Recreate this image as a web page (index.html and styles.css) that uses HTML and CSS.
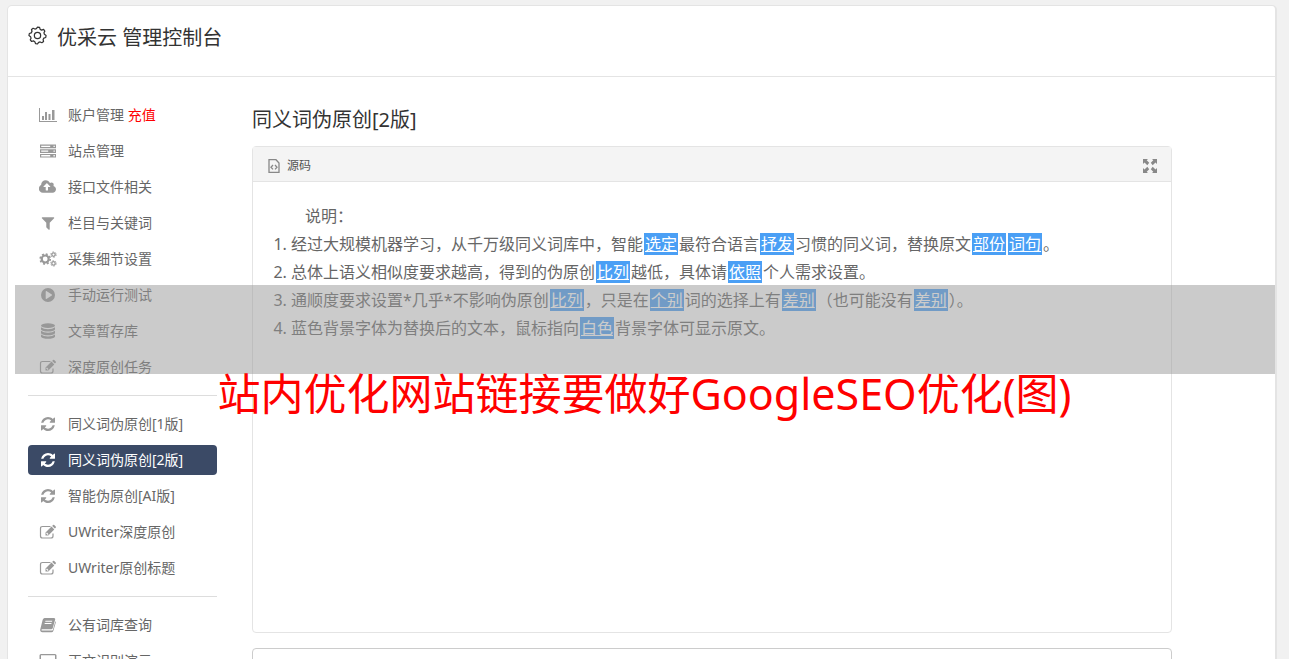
FILE: index.html
```
<!DOCTYPE html>
<html lang="zh-CN">
<head>
<meta charset="utf-8">
<title>优采云 管理控制台</title>
<link rel="stylesheet" href="styles.css">
</head>
<body>
<svg class="sprite" aria-hidden="true">
  <symbol id="i-gear" viewBox="0 0 20 20"><path d="M10 1.2 12.2 1.5 12.8 3.5 14.4 4.3 16.4 3.6 17.7 5.4 16.8 7.2 17.3 8.8 19 10 18.7 12.1 16.7 12.7 15.9 14.3 16.4 16.2 14.6 17.6 12.8 16.8 11.2 17.2 10 18.8 7.9 18.5 7.2 16.5 5.7 15.7 3.8 16.3 2.4 14.6 3.2 12.8 2.7 11.2 1 10 1.4 7.9 3.4 7.2 4.2 5.7 3.7 3.7 5.4 2.4 7.2 3.2 8.8 2.7Z" fill="none" stroke="currentColor" stroke-width="1.3" stroke-linejoin="round"/><circle cx="10" cy="10" r="3.3" fill="none" stroke="currentColor" stroke-width="1.3"/></symbol>
  <symbol id="i-chart" viewBox="0 0 18 16"><path d="M0 1h1v13h17v1H0zM3 9h2v4H3zM6 5h2v8H6zM9.500 7h2v6h-2zM13 3h2.500v10H13z"/></symbol>
  <symbol id="i-server" viewBox="0 0 18 16"><path fill-rule="evenodd" d="M1 1.500h16v3.700H1zM2.200 2.700v1.300h9V2.700zM14.500 2.700v1.300h1.300V2.700zM1 6.200h16v3.700H1zM2.200 7.400v1.300h7V7.400zM14.500 7.400v1.300h1.300V7.400zM1 10.900h16v3.700H1zM2.200 12.100v1.300h9v-1.300zM14.500 12.100v1.300h1.300v-1.300z"/></symbol>
  <symbol id="i-cloud" viewBox="0 0 1920 1792"><path d="M1216 864q0-14-9-23l-352-352q-9-9-23-9t-23 9l-351 351q-10 12-10 24 0 14 9 23t23 9h224v352q0 13 9.500 22.500t22.500 9.500h192q13 0 22.500-9.500t9.500-22.500v-352h224q13 0 22.500-9.500t9.500-22.500zm640 288q0 159-112.500 271.500t-271.500 112.500h-1088q-185 0-316.500-131.500t-131.500-316.500q0-130 70-240t188-165q-2-30-2-43 0-212 150-362t362-150q156 0 285.500 87t188.500 231q71-62 166-62 106 0 181 75t75 181q0 76-41 138 130 31 213.500 135.500t83.500 238.500z"/></symbol>
  <symbol id="i-filter" viewBox="0 0 1792 1792"><path d="M1595 295q17 41-14 70l-493 493v742q0 42-39 59-13 5-25 5-27 0-45-19l-256-256q-19-19-19-45v-486l-493-493q-31-29-14-70 17-39 59-39h1280q42 0 59 39z"/></symbol>
  <symbol id="i-cogs" viewBox="0 0 18 16"><g fill="none" stroke="currentColor"><circle cx="6.200" cy="8" r="3.500" stroke-width="2.200"/><circle cx="6.200" cy="8" r="5" stroke-width="1.600" stroke-dasharray="2 1.927"/><circle cx="14.500" cy="3.600" r="1.700" stroke-width="1.300"/><circle cx="14.500" cy="3.600" r="2.700" stroke-width="1" stroke-dasharray="1.400 1.427"/><circle cx="14.500" cy="12.400" r="1.700" stroke-width="1.300"/><circle cx="14.500" cy="12.400" r="2.700" stroke-width="1" stroke-dasharray="1.400 1.427"/></g></symbol>
  <symbol id="i-play" viewBox="0 0 18 16"><path fill-rule="evenodd" d="M9 1a7 7 0 1 0 0 14A7 7 0 1 0 9 1zM6.700 4.500q0-.7.7-.4l5.400 3.400q.6.500 0 1l-5.400 3.400q-.7.300-.7-.4z"/></symbol>
  <symbol id="i-database" viewBox="0 0 18 16"><ellipse cx="9" cy="2.600" rx="7" ry="2.400"/><path d="M2 4.200q2.500 2 7 2t7-2v2.400q-1.500 2-7 2t-7-2zM2 7.800q2.500 2 7 2t7-2v2.400q-1.500 2-7 2t-7-2zM2 11.400q2.500 2 7 2t7-2v2.300q-1.500 2-7 2t-7-2z"/></symbol>
  <symbol id="i-edit" viewBox="0 0 18 16"><path d="M11.500 2.500H3.500q-2 0-2 2v7.500q0 2 2 2h8.500q2 0 2-2V9.500" fill="none" stroke="currentColor" stroke-width="1.200"/><path fill-rule="evenodd" d="M6.500 11.500V8.600l6-6 2.800 2.800-6 6zM7.400 9.100l-.1.900h.8v.8h.8l.6-.6-1.500-1.600zM13.200 1.900l.8-.8q.6-.6 1.200 0l1.500 1.500q.6.600 0 1.200l-.8.800z"/></symbol>
  <symbol id="i-refresh" viewBox="0 0 1536 1536"><path d="M1511 928q0 5-1 7-64 268-268 434.500t-478 166.500q-146 0-282.500-55t-243.500-157l-129 129q-19 19-45 19t-45-19-19-45v-448q0-26 19-45t45-19h448q26 0 45 19t19 45-19 45l-137 137q71 66 161 102t187 36q134 0 250-65t186-179q11-17 53-117 8-23 30-23h192q13 0 22.500 9.500t9.500 22.500zm25-800v448q0 26-19 45t-45 19h-448q-26 0-45-19t-19-45 19-45l138-138q-148-137-349-137-134 0-250 65t-186 179q-11 17-53 117-8 23-30 23h-199q-13 0-22.500-9.500t-9.500-22.500v-7q65-268 270-434.500t480-166.500q146 0 284 55.500t245 156.500l130-129q19-19 45-19t45 19 19 45z"/></symbol>
  <symbol id="i-book" viewBox="0 0 18 16"><path fill-rule="evenodd" d="M5.500 1H15q1.500.2 1.200 1.500l-2.500 8.700q-.4 1.100-1.500 1.100H3.300q-.9.100-.9.700.1.600 1 .6h9.400q.8 0 1.100-.9l2.500-8.500q.7.500.4 1.300l-2.500 8.400q-.4 1.400-1.800 1.400H3.200q-1.700-.2-2-1.800-.1-.7.100-1.300L3.600 3Q4 1.400 5.500 1zM6.500 3.700l-.3 1H13l.3-1zM5.800 6l-.3 1h6.800l.3-1z"/></symbol>
  <symbol id="i-screen" viewBox="0 0 18 16"><path fill-rule="evenodd" d="M2 1h14q1.500 0 1.500 1.500v9q0 1.500-1.500 1.500h-5v2H7v-2H2q-1.500 0-1.500-1.500v-9Q.5 1 2 1zm0 1.300v8.400h14V2.300z"/></symbol>
  <symbol id="i-source" viewBox="0 0 12 14"><path d="M1 .700h7L11 4v9.300H1z" fill="none" stroke="currentColor" stroke-width="1.300"/><path d="M5 6 3 8.200 5 10.400M7 6l2 2.200-2 2.200" fill="none" stroke="currentColor" stroke-width="1.300"/></symbol>
  <symbol id="i-expand" viewBox="0 0 14 14"><path d="M0 0h5L3.700 1.300 6.200 3.800 4.300 6.200 1.500 3.500 0 5zM14 0v5l-1.500-1.500-2.800 2.700-1.900-2.400 2.500-2.500L9 0zM0 14V9l1.500 1.500 2.800-2.700 1.900 2.400-2.500 2.500L5 14zM14 14H9l1.300-1.300-2.500-2.500 1.900-2.400 2.800 2.700L14 9z"/></symbol>
</svg>

<div class="shell">
  <header class="topbar">
    <svg class="topbar-icon"><use href="#i-gear"/></svg>
    <h1 class="topbar-title">优采云 管理控制台</h1>
  </header>

  <div class="columns">
    <nav class="sidebar">
      <ul class="menu">
        <li><a class="item" href="#"><svg class="icon"><use href="#i-chart"/></svg><span>账户管理 <em class="recharge">充值</em></span></a></li>
        <li><a class="item" href="#"><svg class="icon"><use href="#i-server"/></svg>站点管理</a></li>
        <li><a class="item" href="#"><svg class="icon"><use href="#i-cloud"/></svg>接口文件相关</a></li>
        <li><a class="item" href="#"><svg class="icon"><use href="#i-filter"/></svg>栏目与关键词</a></li>
        <li><a class="item" href="#"><svg class="icon"><use href="#i-cogs"/></svg>采集细节设置</a></li>
        <li><a class="item" href="#"><svg class="icon"><use href="#i-play"/></svg>手动运行测试</a></li>
        <li><a class="item" href="#"><svg class="icon"><use href="#i-database"/></svg>文章暂存库</a></li>
        <li><a class="item" href="#"><svg class="icon"><use href="#i-edit"/></svg>深度原创任务</a></li>
      </ul>
      <ul class="menu">
        <li><a class="item" href="#"><svg class="icon icon-small"><use href="#i-refresh"/></svg>同义词伪原创[1版]</a></li>
        <li><a class="item item-active" href="#" aria-current="page"><svg class="icon icon-small"><use href="#i-refresh"/></svg>同义词伪原创[2版]</a></li>
        <li><a class="item" href="#"><svg class="icon icon-small"><use href="#i-refresh"/></svg>智能伪原创[AI版]</a></li>
        <li><a class="item" href="#"><svg class="icon"><use href="#i-edit"/></svg>UWriter深度原创</a></li>
        <li><a class="item" href="#"><svg class="icon"><use href="#i-edit"/></svg>UWriter原创标题</a></li>
      </ul>
      <ul class="menu">
        <li><a class="item" href="#"><svg class="icon"><use href="#i-book"/></svg>公有词库查询</a></li>
        <li><a class="item" href="#"><svg class="icon"><use href="#i-screen"/></svg>正文识别演示</a></li>
      </ul>
    </nav>

    <main class="content">
      <h2 class="content-title">同义词伪原创[2版]</h2>
      <section class="editor">
        <div class="toolbar">
          <button class="tool" type="button"><svg class="tool-source"><use href="#i-source"/></svg>源码</button>
          <button class="tool" type="button" aria-label="全屏"><svg class="tool-expand"><use href="#i-expand"/></svg></button>
        </div>
        <div class="document">
          <p class="lead">说明：</p>
          <ol class="notes">
            <li>经过大规模机器学习，从千万级同义词库中，智能<mark>选定</mark>最符合语言<mark>抒发</mark>习惯的同义词，替换原文<mark>部份</mark><mark>词句</mark>。</li>
            <li>总体上语义相似度要求越高，得到的伪原创<mark>比列</mark>越低，具体请<mark>依照</mark>个人需求设置。</li>
            <li>通顺度要求设置*几乎*不影响伪原创<mark>比列</mark>，只是在<mark>个别</mark>词的选择上有<mark>差别</mark>（也可能没有<mark>差别</mark>）。</li>
            <li>蓝色背景字体为替换后的文本，鼠标指向<mark>白色</mark>背景字体可显示原文。</li>
          </ol>
        </div>
      </section>
      <textarea class="result" aria-label="结果"></textarea>
    </main>
  </div>
</div>

<div class="band"></div>
<p class="caption">站内优化网站链接要做好GoogleSEO优化(图)</p>
</body>
</html>
```
FILE: styles.css
```
* { box-sizing: border-box; }

body {
  position: relative;
  height: 100vh;
  margin: 0;
  padding: 5px 12px 0 7px;
  overflow: hidden;
  background: #f1f1f1;
  color: #666;
  font: 400 14px/20px "Noto Sans", "Noto Sans CJK SC", sans-serif;
}

.sprite { position: absolute; width: 0; height: 0; }
svg { fill: currentColor; }
h1, h2, p, ul, ol { margin: 0; padding: 0; font-weight: inherit; }

.shell {
  border: 1px solid #e4e4e4;
  border-right-width: 2px;
  border-radius: 5px;
  background: #fff;
}

.topbar {
  display: flex;
  align-items: flex-start;
  gap: 10px;
  padding: 17px 20px 23px;
  border-bottom: 1px solid #e4e4e4;
  color: #333;
}
.topbar-icon { width: 19px; height: 19px; margin-top: 3px; }
.topbar-title { font-size: 20px; line-height: 30px; }

.columns {
  display: flex;
  gap: 35px;
  padding: 23px 103px 0 20px;
}

.sidebar { flex: none; width: 189px; }
.menu {
  display: flex;
  flex-direction: column;
  gap: 6px;
  list-style: none;
}
.menu + .menu {
  margin-top: 13px;
  padding-top: 13px;
  border-top: 1px solid #ddd;
}
.item {
  display: flex;
  align-items: center;
  gap: 11px;
  height: 30px;
  padding: 0 11px;
  border-radius: 4px;
  color: #666;
  text-decoration: none;
}
.icon { flex: none; width: 18px; height: 16px; color: #999; }
.icon-small { padding: 1px 0; }
.item-active, .item-active .icon { color: #fff; }
.item-active { background: #3b4a66; }
.recharge { color: #f00; font-style: normal; }

.content { flex: 1; min-width: 0; }
.content-title {
  padding: 5px 0 11px;
  color: #333;
  font-size: 20px;
  line-height: 30px;
}
.editor {
  border: 1px solid #e4e4e4;
  border-radius: 4px;
}
.toolbar {
  display: flex;
  align-items: center;
  justify-content: space-between;
  height: 35px;
  padding: 3px 14px 0 15px;
  border-bottom: 1px solid #e4e4e4;
  background: #f4f4f4;
}
.tool {
  display: flex;
  align-items: center;
  gap: 7px;
  padding: 0;
  border: 0;
  background: none;
  color: #555;
  font: inherit;
  font-size: 12px;
}
.tool svg { color: #888; }
.tool-source { width: 12px; height: 14px; }
.tool-expand { width: 14px; height: 14px; }

.document {
  min-height: 450px;
  padding: 20px;
  font-size: 16px;
  line-height: 28px;
}
.lead { padding-left: 32px; }
.notes { padding-left: 18px; }
mark {
  margin: 0 1px;
  padding: 0 1px;
  background: #4a9ff5;
  color: #fff;
  text-decoration: underline;
}
.result {
  display: block;
  width: 100%;
  height: 120px;
  margin-top: 15px;
  border: 1px solid #ccc;
  border-radius: 4px;
  resize: none;
}

.band {
  position: absolute;
  top: 285px;
  right: 14px;
  left: 15px;
  height: 89px;
  background: rgba(152, 152, 152, 0.5);
}
.caption {
  position: absolute;
  top: 362px;
  right: 0;
  left: 0;
  color: #f00;
  font-size: 43px;
  line-height: 64px;
  text-align: center;
}
```
